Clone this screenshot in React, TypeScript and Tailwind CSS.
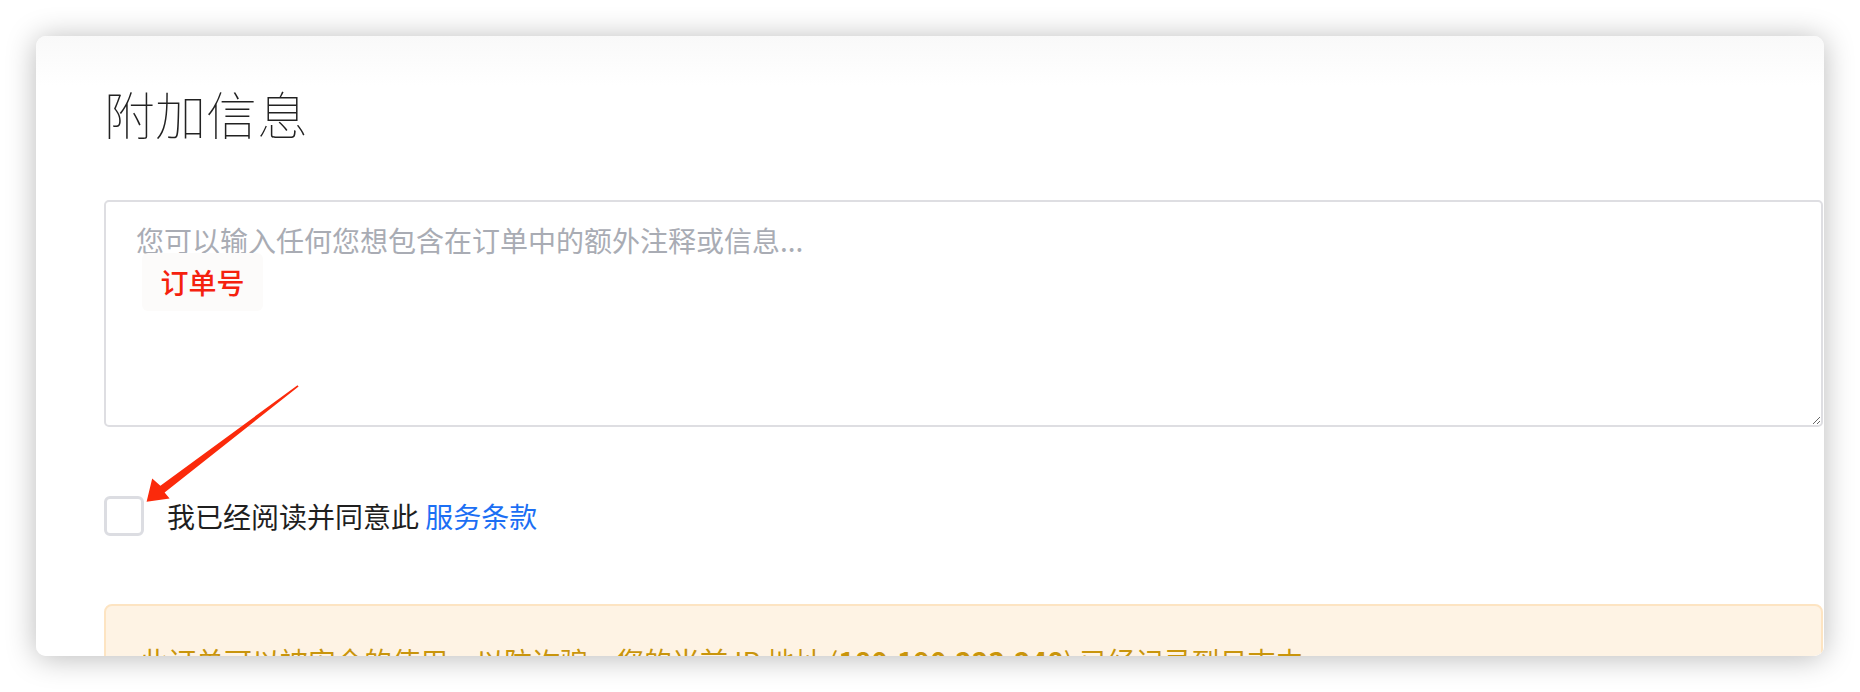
import React from 'react';

const font = "font-['Noto_Sans_CJK_SC','Noto_Sans',sans-serif]";

function ArrowMark() {
  // red annotation arrow pointing at the checkbox
  return (
    <svg
      className="pointer-events-none absolute left-[104px] top-[344px]"
      width="170"
      height="130"
      viewBox="0 0 170 130"
    >
      <polygon
        points="157.5,5.2 158.6,6.6 24.6,112.4 29.6,118.6 6.6,121.8 12.2,98.4 20.4,105.8"
        fill="#fb2a0b"
      />
    </svg>
  );
}

export default function App() {
  return (
    <div className={`min-h-screen bg-white p-9 ${font}`}>
      <div className="relative h-[620px] overflow-hidden rounded-[10px] bg-[linear-gradient(to_bottom,#f9f9f9,#ffffff_50px)] pl-[68px] pr-px pt-[52px] shadow-[0_2px_30px_rgba(0,0,0,0.28)]">
        {/* Heading */}
        <h2 className="text-[51px] font-thin leading-[51px] text-[#222222]">附加信息</h2>

        {/* Notes */}
        <textarea
          className="mt-[61px] block h-[227px] w-full rounded-[5px] border-2 border-[#dedee2] bg-white px-[30px] pt-[18px] text-[28px] leading-[40px] text-[#333333] outline-none placeholder:text-[#a9acb4]"
          placeholder="您可以输入任何您想包含在订单中的额外注释或信息..."
        />

        {/* Terms */}
        <label className="mt-[69px] flex h-10 items-center gap-[23px]">
          <input
            type="checkbox"
            className="h-10 w-10 shrink-0 appearance-none rounded-[6px] border-[3px] border-[#dcdde2] bg-white"
          />
          <span className="text-[28px] leading-[40px] text-[#1f1f1f]">
            我已经阅读并同意此 <a className="text-[#1c6ff4]">服务条款</a>
          </span>
        </label>

        {/* Notice */}
        <div className="mt-[68px] rounded-[8px] border-2 border-[#fde4c2] bg-[#fef3e4] px-[34px] py-[35px] text-[28px] leading-[40px] text-[#c9950c]">
          此订单可以被安全的使用，以防诈骗，您的当前 IP 地址 (<b>180.190.223.248</b>) 已经记录到日志中。
        </div>

        {/* annotation label */}
        <div className="absolute left-[106px] top-[217px] flex h-[58px] w-[121px] items-center justify-center rounded-[6px] bg-[#fcfbfa] text-[28px] font-medium text-[#f5210e]">
          订单号
        </div>

        <ArrowMark />
      </div>
    </div>
  );
}
